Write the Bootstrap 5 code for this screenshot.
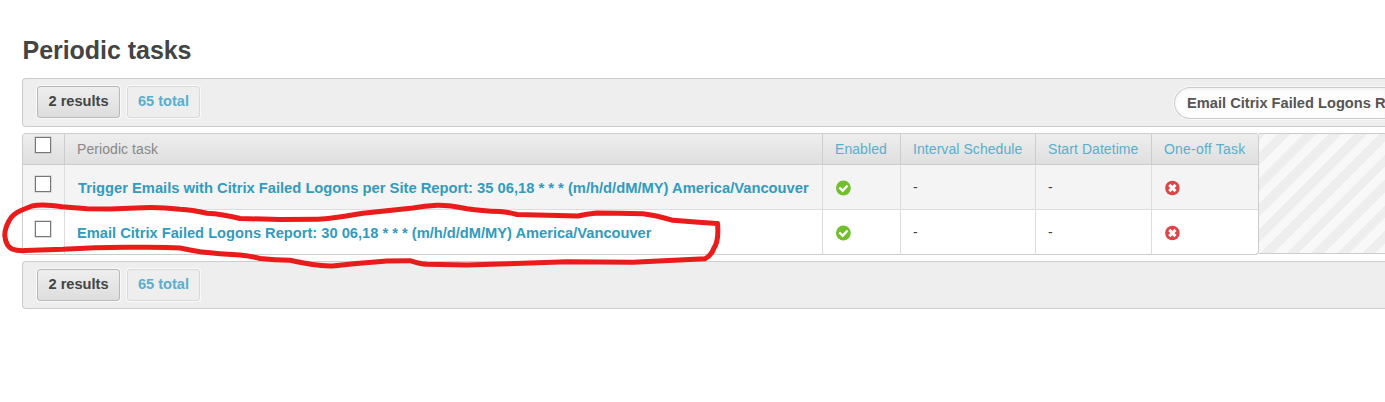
<!DOCTYPE html>
<html lang="en">
<head>
<meta charset="utf-8">
<title>Periodic tasks</title>
<link href="https://cdn.jsdelivr.net/npm/bootstrap@5.3.0/dist/css/bootstrap.min.css" rel="stylesheet">
<style>
html,body{overflow:hidden}
body{font-family:"Liberation Sans",Arial,sans-serif;font-size:14px;line-height:18px;color:#444;height:402px;background:#fff}
.page-wrap{padding:35px 0 0 22px}
h1{font-size:25px;line-height:30px;color:#444;margin:0 0 13px;padding-left:.5px;letter-spacing:-.04px}
.bar{height:49px;background:#eee;border:1px solid #ccc;border-right:0;border-radius:4px 0 0 4px;padding:7px 0 7px 14px}
.bar.bottom{height:48px}
.pill{height:32px;line-height:29px;border:1px solid #d9d9d9;border-radius:3px;font-weight:700;font-size:14.6px;box-shadow:0 0 0 1px #fafafa;color:#59afcc;text-align:center;width:73px;text-decoration:none;margin-left:7px}
.pill.on{width:83px;margin-left:0;color:#444;border-color:#b8b8b8;background:linear-gradient(#eee,#ddd)}
.search{width:211px;height:32px;margin-top:1px;border:1px solid #ccc;border-right:0;border-radius:16px 0 0 16px;background:#fdfdfd;box-shadow:0 0 0 1px #f8f8f8,inset 0 1px 3px #eee;font-weight:700;color:#555;padding-left:12px;line-height:31px;font-size:14.65px;overflow:hidden}
.results{height:122px;margin:6px 0}
.hatch{height:121px;border:solid #ccc;border-width:1px 0;background:repeating-linear-gradient(135deg,#eee 0 4.4px,#f8f8f8 4.4px 13.4px,#eee 13.4px 18px)}
.grid{display:grid;grid-template-columns:42px 758px 78px 135px 116px 107px;grid-template-rows:32px 45px 45px;width:1237px;height:122px;border:1px solid #ccc;border-bottom:0;border-radius:4px;overflow:hidden;box-shadow:inset 0 -1px #ccc;background:#fff}
.grid>div{border-right:1px solid #ddd;border-bottom:1px solid #ddd;padding-left:12px;white-space:nowrap}
.grid>.hd{height:31px;align-self:start;background:linear-gradient(#eee,#dfdfdf);border-color:#ccc;color:#888;line-height:30px;letter-spacing:.07px}
.grid>.sortable{color:#59afcc}
.grid>.hd.end{letter-spacing:.22px}
.grid>.r1{background:#f4f4f4;margin-top:-1px;height:45px}
.grid>.r2{margin-top:-1px;height:45px;border-bottom-color:#ccc}
.grid>.end{border-right:0}
.box{width:16px;height:16px;border:1px solid #777;background:#fff;display:block;margin-top:11px;box-shadow:0 0 0 .5px #bbb}
.hd .box{margin-top:3px}
.grid>.task{font-weight:700;color:#309bbf;line-height:46px;font-size:14.67px}
.grid>.r1.task{padding-left:13px;font-size:14.73px;line-height:47px}
.val{line-height:44px}
.val svg{display:block;margin-top:15px}
.scribble{position:absolute;left:0;top:0;pointer-events:none}
</style>
</head>
<body>
<svg class="d-none"><defs>
<symbol id="yes" viewBox="0 0 16 16"><circle cx="8.400" cy="8" r="7.400" fill="#70bf2b"/><path d="M4.300 7.500 7.700 10.700 12.500 5.500" fill="none" stroke="#fff" stroke-width="2.400"/></symbol>
<symbol id="no" viewBox="0 0 16 16"><circle cx="8.400" cy="8" r="7.300" fill="#dd4646"/><path d="m5.300 4.900 6.200 6.200m0-6.200-6.200 6.200" fill="none" stroke="#fff" stroke-width="2.900"/></symbol>
</defs></svg>
<main class="page-wrap">
  <h1 class="fw-bold">Periodic tasks</h1>
  <div class="bar d-flex">
    <a class="pill on">2 results</a><a class="pill">65 total</a>
    <div class="search ms-auto text-nowrap">Email Citrix Failed Logons R</div>
  </div>
  <div class="results d-flex align-items-start">
    <div class="grid flex-shrink-0">
      <div class="hd"><span class="box"></span></div><div class="hd">Periodic task</div><div class="hd sortable">Enabled</div><div class="hd sortable">Interval Schedule</div><div class="hd sortable">Start Datetime</div><div class="hd sortable end">One-off Task</div>
      <div class="r1"><span class="box"></span></div><div class="r1 task">Trigger Emails with Citrix Failed Logons per Site Report: 35 06,18 * * * (m/h/d/dM/MY) America/Vancouver</div><div class="r1 val"><svg width="16" height="16"><use href="#yes"/></svg></div><div class="r1 val">-</div><div class="r1 val">-</div><div class="r1 val end"><svg width="16" height="16"><use href="#no"/></svg></div>
      <div class="r2"><span class="box"></span></div><div class="r2 task">Email Citrix Failed Logons Report: 30 06,18 * * * (m/h/d/dM/MY) America/Vancouver</div><div class="r2 val"><svg width="16" height="16"><use href="#yes"/></svg></div><div class="r2 val">-</div><div class="r2 val">-</div><div class="r2 val end"><svg width="16" height="16"><use href="#no"/></svg></div>
    </div>
    <div class="hatch flex-grow-1"></div>
  </div>
  <div class="bar bottom d-flex">
    <a class="pill on">2 results</a><a class="pill">65 total</a>
  </div>
</main>
<svg class="scribble" width="1385" height="402"><path fill="none" stroke="#e91b1b" stroke-width="5" stroke-linejoin="round" stroke-linecap="round" d="M717 223.500C702 222.500 688 221.500 673 220.300Q655 215 643 213.700Q618 213 597 213Q586 214 578 216L517 214.500Q508 212 500 211.500Q482 211 467 208.700Q448 205 437 205.300Q425 206 413 208L363 213.300Q330 219 318 219.300L280 219.500 240 218.500Q222 214 207 213.300Q192 210 180 209.300Q160 207 143 207.700L110 209 87 208.700 62 206.700Q42 203.500 32 206L22 210Q12 214 9 221Q4 230 5 237Q6 246 12 249Q17 251 25 250.600L63 249.300Q100 247 133 247.300Q165 247 180 248Q190 250 200 251.700Q220 254 240 255Q250 256 260 258.500Q275 260 290 260.300Q320 267 335 265.700Q360 263 387 261L410 260.700Q420 264 427 264.300L467 265 500 264 567 261.700 633 262.300 705 258.700Q711 256 714 248Q719 241 717.500 223.500"/></svg>
<script src="https://cdn.jsdelivr.net/npm/bootstrap@5.3.0/dist/js/bootstrap.bundle.min.js"></script>
</body>
</html>
